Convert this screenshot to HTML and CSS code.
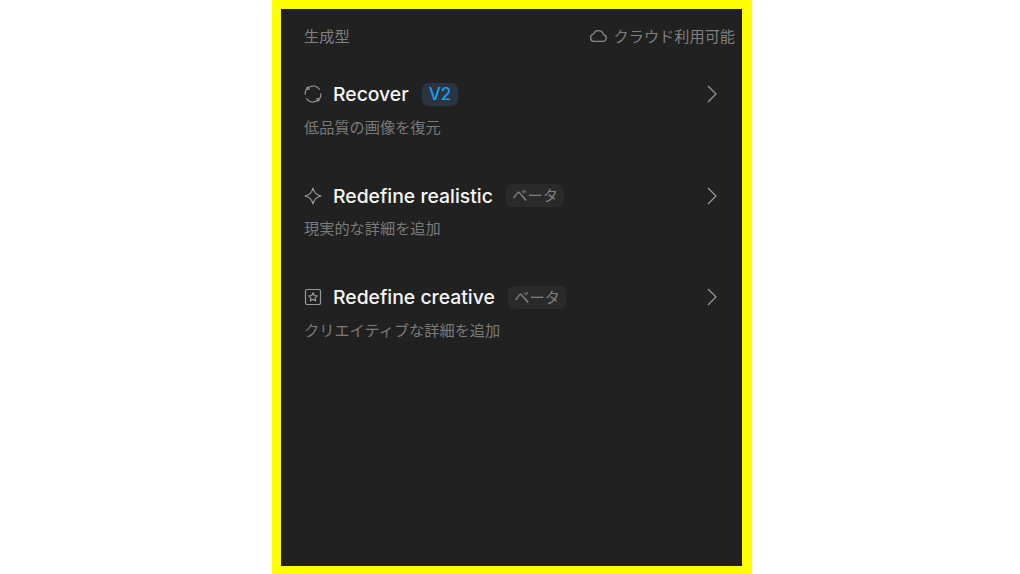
FILE: index.html
```html
<!DOCTYPE html>
<html lang="ja">
<head>
<meta charset="utf-8">
<title>生成型</title>
<link rel="stylesheet" href="styles.css">
</head>
<body>
<main class="frame">
  <div class="panel">
    <header class="head">
      <span class="head-title">生成型</span>
      <span class="cloud">
        <svg class="cloud-icon" viewBox="0 0 18 14" fill="none"><path d="M4.600 12.600h8.600a3.200 3.200 0 0 0 .5-6.350A4.900 4.900 0 0 0 4.300 5.600a3.550 3.550 0 0 0 .3 7Z"/></svg>
        クラウド利用可能
      </span>
    </header>
    <section class="item">
      <div class="row">
        <svg class="icon" viewBox="0 0 18 18" fill="none"><path d="M1.200 9.500A7.800 7.800 0 0 1 15.600 4.800M16.800 8.500A7.800 7.800 0 0 1 2.400 13.200"/><path d="M3.300 1.400v2.700H6M14.700 16.600v-2.700H12"/></svg>
        <span class="name">Recover</span>
        <span class="tag tag-blue">V2</span>
        <svg class="chev" viewBox="0 0 10 18" fill="none"><path d="M1 1l8 8-8 8"/></svg>
      </div>
      <p class="desc">低品質の画像を復元</p>
    </section>
    <section class="item">
      <div class="row">
        <svg class="icon" viewBox="0 0 18 18" fill="none"><path d="M9 1c.9 4.600 3 6.900 8 8-5 1.100-7.100 3.400-8 8-.9-4.600-3-6.900-8-8 5-1.100 7.100-3.400 8-8Z"/></svg>
        <span class="name">Redefine realistic</span>
        <span class="tag">ベータ</span>
        <svg class="chev" viewBox="0 0 10 18" fill="none"><path d="M1 1l8 8-8 8"/></svg>
      </div>
      <p class="desc">現実的な詳細を追加</p>
    </section>
    <section class="item">
      <div class="row">
        <svg class="icon" viewBox="0 0 18 18" fill="none"><rect x="1.500" y="1.500" width="15" height="15" rx="1.500"/><path d="m9 4.800 1.300 2.700 3 .4-2.200 2 .6 2.900L9 11.400l-2.700 1.400.6-2.900-2.200-2 3-.4Z"/></svg>
        <span class="name">Redefine creative</span>
        <span class="tag">ベータ</span>
        <svg class="chev" viewBox="0 0 10 18" fill="none"><path d="M1 1l8 8-8 8"/></svg>
      </div>
      <p class="desc">クリエイティブな詳細を追加</p>
    </section>
  </div>
</main>
</body>
</html>
```

FILE: styles.css
```css
* { box-sizing: border-box; }
html, body { margin: 0; height: 100%; background: #fff; }
body {
  display: flex;
  justify-content: center;
  font-family: Inter, "Noto Sans CJK JP", sans-serif;
  overflow: hidden;
}
.frame {
  width: 480px;
  height: 574px;
  margin-left: 4px;
  padding: 9px 10px 8px 9px;
  background: #ffff00;
}
.panel {
  height: 100%;
  padding: 0 6px 0 23px;
  background: #212121;
  border-right: 1px solid #1a1c2c;
}
.head {
  display: flex;
  justify-content: space-between;
  align-items: center;
  height: 51px;
  font-size: 15.200px;
  color: #808080;
}
.cloud { display: flex; align-items: center; gap: 6px; }
.cloud-icon { width: 19px; height: 15px; margin: 1px 0 0 -1px; stroke: #8a8a8a; stroke-width: 1.200; }
.item { height: 101.500px; padding-top: 20px; padding-right: 18px; }
.row { display: flex; align-items: center; height: 28px; }
.icon { width: 18px; height: 18px; margin-right: 11px; stroke: #9a9a9a; stroke-width: 1.200; stroke-linejoin: round; }
.name { font-size: 19.350px; font-weight: 450; color: #f6f6f6; }
.tag {
  margin-left: 13px;
  padding: 0 6.500px 3px;
  height: 23px;
  display: flex;
  align-items: center;
  border-radius: 6px;
  background: #2a2a2a;
  font-size: 15.200px;
  color: #808080;
}
.tag-blue { padding: 0 7px; background: #2a3540; color: #1a9bf5; font-size: 17px; font-weight: 500; }
.chev { width: 10px; height: 18px; margin-left: auto; stroke: #9a9a9a; stroke-width: 1.200; }
.desc { margin: 9.500px 0 0; font-size: 15.200px; line-height: 20px; color: #7a7a7a; }
```
